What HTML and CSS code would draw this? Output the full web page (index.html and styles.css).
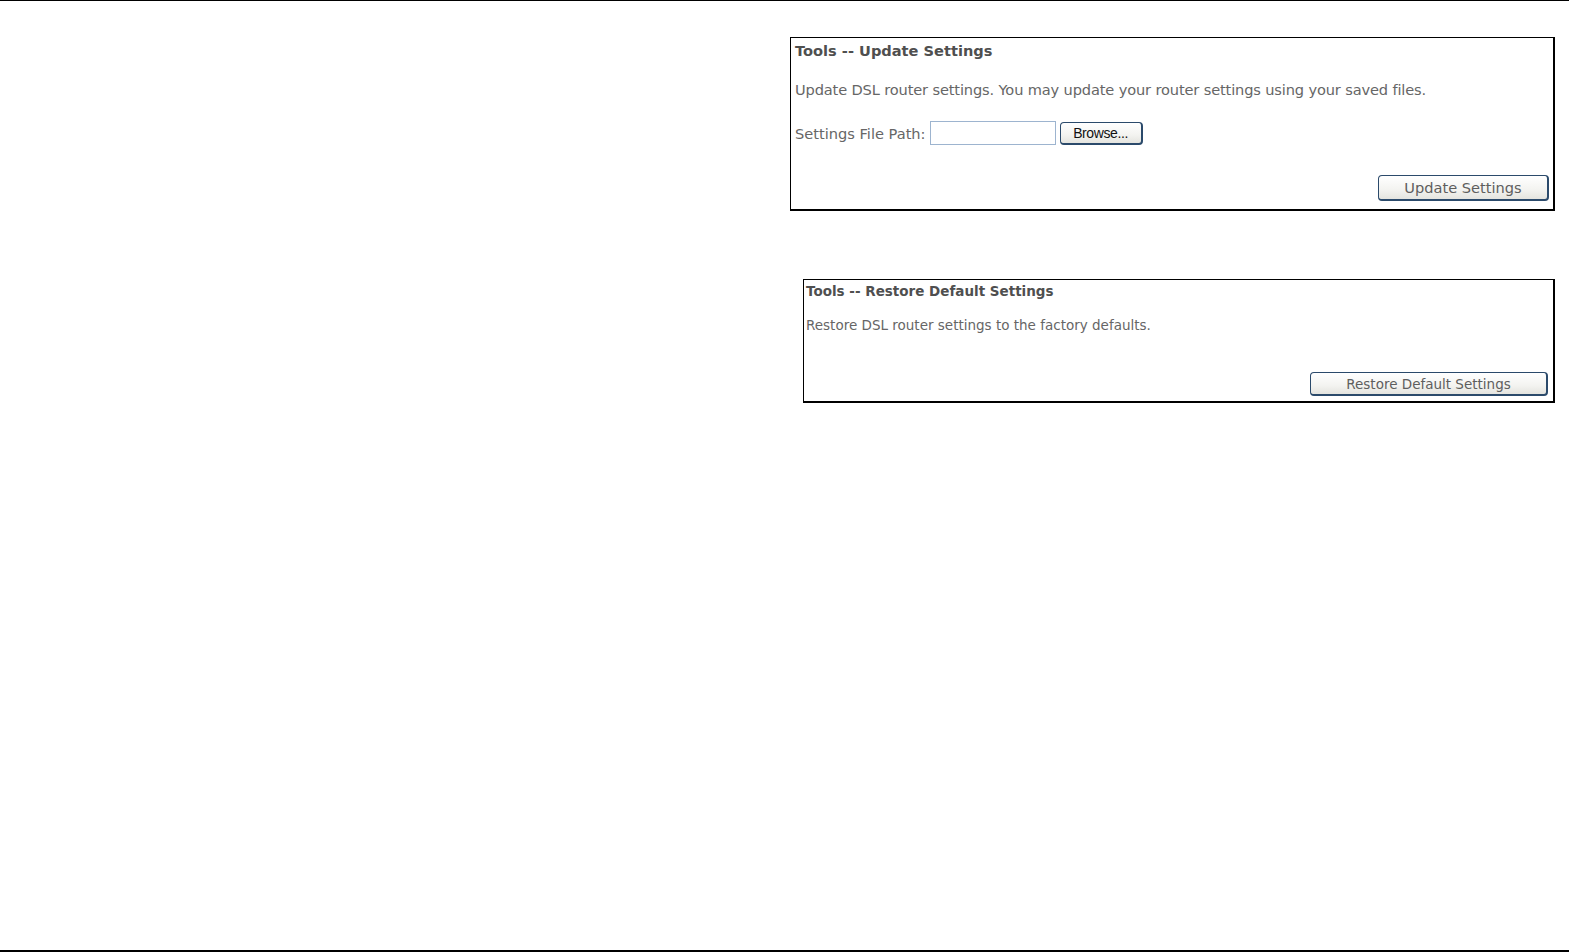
FILE: index.html
```html
<!DOCTYPE html>
<html lang="en">
<head>
  <meta charset="UTF-8">
  <title>Tools -- Update Settings</title>
  <link rel="stylesheet" href="styles.css">
</head>
<body>
<div class="page">
  <div class="panel panel-update">
    <div class="panel-title">Tools -- Update Settings</div>
    <div class="panel-text">Update DSL router settings. You may update your router settings using your saved files.</div>
    <div class="file-row">
      <label for="filePath">Settings File Path:</label>
      <input id="filePath" type="text" class="file-input">
      <button class="btn btn-browse" type="button">Browse...</button>
    </div>
    <div class="panel-actions">
      <button class="btn btn-main btn-update" type="button">Update Settings</button>
    </div>
  </div>

  <div class="panel panel-restore">
    <div class="panel-title">Tools -- Restore Default Settings</div>
    <div class="panel-text">Restore DSL router settings to the factory defaults.</div>
    <div class="panel-actions">
      <button class="btn btn-main btn-restore" type="button">Restore Default Settings</button>
    </div>
  </div>
</div>
</body>
</html>
```

FILE: styles.css
```css
html, body {
  margin: 0;
  padding: 0;
  background: #fff;
  font-family: "DejaVu Sans", Verdana, sans-serif;
}
.page {
  box-sizing: border-box;
  height: 952px;
  border-top: 1px solid #000;
  border-bottom: 2px solid #000;
  padding-top: 36px;
  display: flex;
  flex-direction: column;
}
.panel {
  box-sizing: border-box;
  border: 1px solid #000;
  border-right-width: 2px;
  border-bottom-width: 2px;
  display: flex;
  flex-direction: column;
  color: #666;
}
.panel-title {
  font-weight: bold;
  color: #4f4f4f;
}

/* Update */
.panel-update {
  margin-left: 790px;
  width: 765px;
  padding: 3px 4px 8px 4px;
  font-size: 14.6px;
}
.panel-update .panel-title,
.panel-update .panel-text {
  line-height: 20px;
}
.panel-update .panel-text {
  margin-top: 19px;
  letter-spacing: -0.14px;
}
.file-row {
  margin-top: 20px;
  height: 26px;
  display: flex;
  align-items: center;
}
.file-input {
  box-sizing: border-box;
  width: 126px;
  height: 24px;
  margin: 0 4px 0 4px;
  border: 1px solid #9db4cf;
  padding: 0 4px;
}
.panel-update .panel-actions {
  margin-top: 29px;
}
.panel-actions {
  display: flex;
  justify-content: flex-end;
}

/* Buttons */
.btn {
  box-sizing: border-box;
  background: linear-gradient(#ffffff, #f3f3f0 60%, #e4e4df);
  border: 1px solid #2b4a6b;
  border-right-width: 2px;
  border-bottom-width: 2px;
  border-radius: 4px;
  padding: 0;
  font-family: "DejaVu Sans", Verdana, sans-serif;
  color: #5e5e5e;
}
.btn-browse {
  width: 83px;
  height: 23px;
  font-family: "Liberation Sans", Arial, sans-serif;
  font-size: 14px;
  color: #111;
  letter-spacing: -0.4px;
}
.btn-update {
  width: 171px;
  height: 26px;
  font-size: 14.6px;
}

/* Restore */
.panel-restore {
  margin-top: 68px;
  margin-left: 803px;
  width: 752px;
  padding: 2px 5px 5px 2px;
  font-size: 13.5px;
}
.panel-restore .panel-title,
.panel-restore .panel-text {
  line-height: 18px;
}
.panel-restore .panel-text {
  margin-top: 16px;
}
.panel-restore .panel-actions {
  margin-top: 38px;
}
.btn-restore {
  width: 238px;
  height: 24px;
  font-size: 13.5px;
}
```
